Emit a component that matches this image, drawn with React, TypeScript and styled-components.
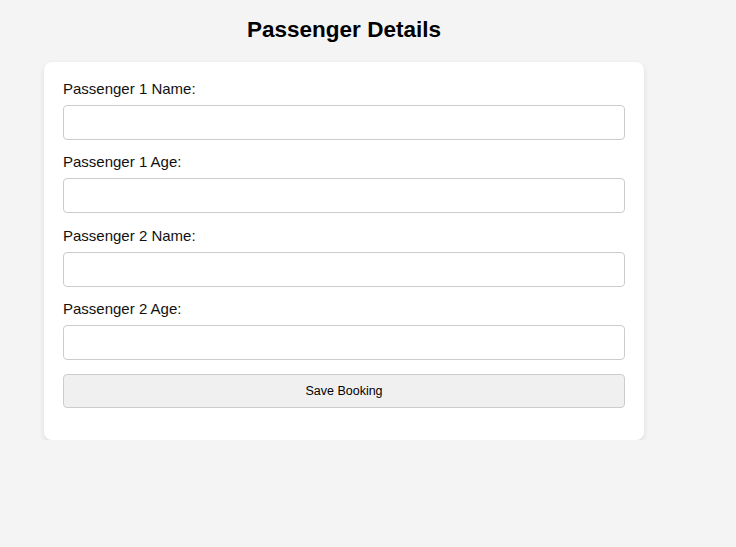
import { FC } from "react";
import styled, { createGlobalStyle } from "styled-components";

const FIELDS = [
	"Passenger 1 Name:",
	"Passenger 1 Age:",
	"Passenger 2 Name:",
	"Passenger 2 Age:",
];

const GlobalStyle = createGlobalStyle`
	html, body {
		margin:0;
		padding:0;
		background:#f4f4f4;
	}
	body {
		font-family:"Liberation Sans", Arial, sans-serif;
		font-size:15px;
		color:#111;
	}
`;

const App:FC = () => {
	return (
		<>
			<GlobalStyle />
			<Page>
				<Title>Passenger Details</Title>
				<Card>
					{ FIELDS.map((label, i) => (
						<Field key={ "f" + i }>
							<Label htmlFor={ "p" + i }>{ label }</Label>
							<Input id={ "p" + i } type="text" />
						</Field>
					)) }
					<SaveButton type="button">Save Booking</SaveButton>
				</Card>
			</Page>
		</>
	);
};

export default App;

const Page = styled.div`
	width:600px;
	padding:17px 0 0 44px;
`;

const Title = styled.h2`
	margin:0 0 19px;
	font-size:22.5px;
	font-weight:bold;
	text-align:center;
	color:#000;
`;

const Card = styled.div`
	background:#fff;
	border-radius:8px;
	box-shadow:0 2px 5px rgba(0,0,0,0.1);
	padding:18px 19px 19px;
	display:flex;
	flex-direction:column;
`;

const Field = styled.div`
	display:flex;
	flex-direction:column;
	margin-bottom:13.3px;
`;

const Label = styled.label`
	font-size:15px;
	margin-bottom:8px;
`;

const Input = styled.input`
	box-sizing:border-box;
	width:100%;
	height:35px;
	padding:8px;
	border:1px solid #ccc;
	border-radius:4px;
	font-family:inherit;
	font-size:15px;
	background:#fff;
`;

const SaveButton = styled.button`
	box-sizing:border-box;
	width:100%;
	height:34px;
	margin:0.5px 0 13px;
	background:#f0f0f0;
	border:1px solid #ccc;
	border-radius:4px;
	font-family:"Liberation Sans", Arial, sans-serif;
	font-size:12.5px;
	color:#000;
`;
